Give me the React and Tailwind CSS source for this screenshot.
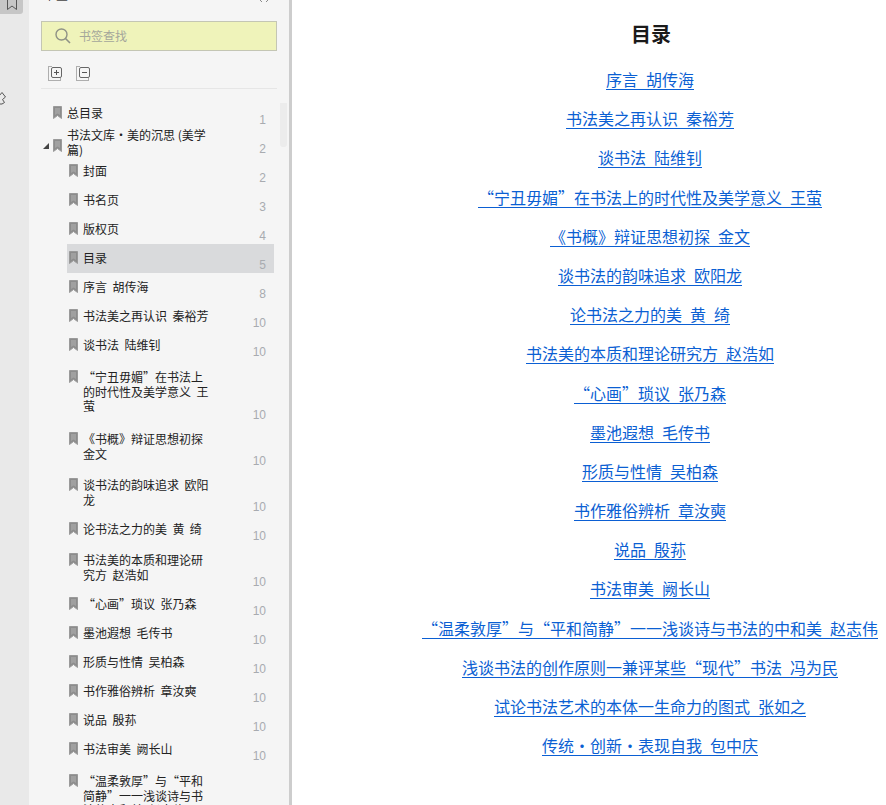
const cjk = "font-['Noto_Sans_CJK_SC',sans-serif]";

const entries = [
  { lines: ["总目录"], page: 1, level: 0 },
  { lines: ["书法文库・美的沉思 (美学", "篇)"], page: 2, level: 0, open: true },
  { lines: ["封面"], page: 2 },
  { lines: ["书名页"], page: 3 },
  { lines: ["版权页"], page: 4 },
  { lines: ["目录"], page: 5, active: true },
  { lines: ["序言  胡传海"], page: 8 },
  { lines: ["书法美之再认识  秦裕芳"], page: 10 },
  { lines: ["谈书法  陆维钊"], page: 10 },
  { lines: ["“宁丑毋媚”在书法上", "的时代性及美学意义  王", "萤"], page: 10 },
  { lines: ["《书概》辩证思想初探", "金文"], page: 10 },
  { lines: ["谈书法的韵味追求  欧阳", "龙"], page: 10 },
  { lines: ["论书法之力的美  黄  绮"], page: 10 },
  { lines: ["书法美的本质和理论研", "究方  赵浩如"], page: 10 },
  { lines: ["“心画”琐议  张乃森"], page: 10 },
  { lines: ["墨池遐想  毛传书"], page: 10 },
  { lines: ["形质与性情  吴柏森"], page: 10 },
  { lines: ["书作雅俗辨析  章汝奭"], page: 10 },
  { lines: ["说品  殷荪"], page: 10 },
  { lines: ["书法审美  阙长山"], page: 10 },
  { lines: ["“温柔敦厚”与“平和", "简静”一一浅谈诗与书", "法的中和美  赵志伟"], page: 10 },
];

const links = [
  "序言 胡传海",
  "书法美之再认识 秦裕芳",
  "谈书法 陆维钊",
  "“宁丑毋媚”在书法上的时代性及美学意义 王萤",
  "《书概》辩证思想初探 金文",
  "谈书法的韵味追求 欧阳龙",
  "论书法之力的美 黄 绮",
  "书法美的本质和理论研究方 赵浩如",
  "“心画”琐议 张乃森",
  "墨池遐想 毛传书",
  "形质与性情 吴柏森",
  "书作雅俗辨析 章汝奭",
  "说品 殷荪",
  "书法审美 阙长山",
  "“温柔敦厚”与“平和简静”一一浅谈诗与书法的中和美 赵志伟",
  "浅谈书法的创作原则一兼评某些“现代”书法 冯为民",
  "试论书法艺术的本体一生命力的图式 张如之",
  "传统・创新・表现自我 包中庆",
];

const BookmarkIcon = ({ className }) => (
  <svg width="9" height="13" viewBox="0 0 9 13" className={`shrink-0 ${className || ""}`}>
    <path d="M0.5 0.5H8.5V12.5L4.5 9.5L0.5 12.5Z" fill="#8c8c8c" stroke="#9a9a9a" />
    <path d="M2 2H7V9L4.5 7.5L2 9Z" fill="#a0a0a0" />
  </svg>
);

const ExpandIcon = ({ minus }) => (
  <svg width="15" height="15" viewBox="0 0 15 15" fill="none" className="shrink-0">
    <path d="M3.5 0.5H0.5V14.5H12.5V12" stroke="#666666" strokeDasharray="1 1" />
    <rect x="3.5" y="1.5" width="10" height="10" rx="1.5" fill="#f5f5f5" stroke="#666666" />
    <path d="M6 6.5H11" stroke="#555555" />
    {!minus && <path d="M8.5 4V9" stroke="#555555" />}
  </svg>
);

const Row = ({ entry }) => {
  const nested = entry.level !== 0;
  const count = entry.lines.length;
  let pad = "py-[7.25px]";
  if (!nested && count === 2) pad = "py-0";
  if (nested && count === 2) pad = "pt-[9px] pb-[8px]";
  if (nested && count === 3) pad = "pt-[10px] pb-[9.5px]";
  return (
    <div
      className={`relative flex ${nested ? "ml-[38px] pl-[2px]" : "ml-[24px]"} mr-[15px] ${pad} ${
        entry.active ? "bg-[#d9dadc]" : ""
      }`}
    >
      {entry.open && (
        <span className="absolute left-[-10px] top-[15px] h-0 w-0 border-b-[6px] border-l-[6px] border-b-[#444444] border-l-transparent" />
      )}
      <div className="flex items-start gap-[5px]">
        <BookmarkIcon className={entry.open ? "mt-[11px]" : ""} />
        <div className="w-[135px] text-[12px] leading-[14.5px] whitespace-pre text-[#222222]">
          {entry.lines.map((line) => (
            <div key={line}>{line}</div>
          ))}
        </div>
      </div>
      <span className="absolute right-[8px] bottom-0 text-[12px] leading-[15px] text-[#a8abb0] font-['Liberation_Sans',sans-serif]">
        {entry.page}
      </span>
    </div>
  );
};

export default function App() {
  return (
    <div className={`flex h-[805px] overflow-hidden bg-white ${cjk}`}>
      {/* left tab strip */}
      <div className="flex w-[29px] shrink-0 flex-col bg-[#e9e9e9]">
        <div className="flex h-[14px] w-[23px] items-end justify-center overflow-hidden rounded-br-[3px] bg-[#c6c6c6] pb-[3px]">
          <svg width="12" height="14" viewBox="0 0 12 14" fill="none" className="shrink-0">
            <path d="M1.5 0V12.5L6 9L10.5 12.5V0" stroke="#555555" />
          </svg>
        </div>
        <svg width="6" height="14" viewBox="0 0 6 14" fill="none" className="mt-[77px]">
          <path d="M-1 5L2 1.5L5.5 6L2.5 8.5L4.5 11.5L2 13H-1" stroke="#555555" />
        </svg>
      </div>

      {/* bookmark panel */}
      <div className="relative flex w-[260px] shrink-0 flex-col overflow-hidden bg-[#f5f5f5]">
        <div className="flex h-[21px] shrink-0 items-start justify-between pr-[19px] pl-[15px]">
          <span className="-mt-[13px] text-[12px] leading-[15px] text-[#444444]">书签</span>
          <svg width="11" height="3" viewBox="0 0 11 3" fill="none">
            <path d="M1 0L3 2M9 0L7 2" stroke="#8a8a8a" />
          </svg>
        </div>
        <div className="mx-[12px] flex h-[30px] shrink-0 items-center gap-[8px] border border-[#c4c6b4] bg-[#eff3ba] pl-[13px]">
          <svg width="16" height="16" viewBox="0 0 16 16" fill="none" className="shrink-0">
            <circle cx="6.5" cy="6.5" r="5.5" stroke="#8f9286" strokeWidth="1.4" />
            <path d="M10.5 10.5L15 15" stroke="#8f9286" strokeWidth="1.6" />
          </svg>
          <span className="text-[12px] text-[#a4a69a]">书签查找</span>
        </div>
        <div className="ml-[19px] mt-[15px] flex gap-[13px]">
          <ExpandIcon />
          <ExpandIcon minus />
        </div>
        <div className="mx-[12px] mt-[7px] h-px shrink-0 bg-[#e6e6e6]" />
        <div className="mt-[10px]">
          {entries.map((entry) => (
            <Row key={entry.lines[0]} entry={entry} />
          ))}
        </div>
        <div className="absolute left-[251px] top-[103px] h-[44px] w-[7px] rounded-b-[3px] bg-[#ececec]" />
      </div>

      {/* page */}
      <div className="min-w-0 flex-1 border-l-[3px] border-l-[#cdcdcd]">
        <div className="ml-[122px] flex flex-col items-center">
          <h1 className="mt-[20px] ml-[2px] text-[20px] leading-[28px] font-bold text-[#1a1a1a]">目录</h1>
          <div className="mt-[20px] flex flex-col items-center gap-[17.2px]">
            {links.map((text) => (
              <a
                key={text}
                href="#"
                className="text-[16px] leading-[22px] whitespace-nowrap text-[#0b5fd3] underline underline-offset-[3px] [word-spacing:4.4px]"
              >
                {text}
              </a>
            ))}
          </div>
        </div>
      </div>
    </div>
  );
}
